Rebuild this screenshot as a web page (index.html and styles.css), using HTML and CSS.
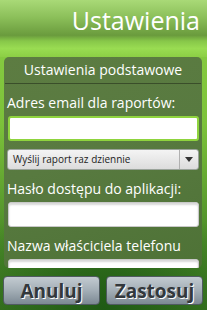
FILE: index.html
```html
<!DOCTYPE html>
<html lang="pl">
<head>
	<meta charset="UTF-8">
	<title>Ustawienia</title>
	<link rel="stylesheet" href="styles.css">
</head>
<body>
	<div class="screen">
		<div class="header">
			<h1>Ustawienia</h1>
		</div>
		<div class="panel">
			<h2>Ustawienia podstawowe</h2>
			<label>Adres email dla raportów:</label>
			<div class="input focused"></div>
			<div class="spinner">
				<span class="value">Wyślij raport raz dziennie</span>
				<span class="arrow"></span>
			</div>
			<label>Hasło dostępu do aplikacji:</label>
			<div class="input"></div>
			<label>Nazwa właściciela telefonu</label>
			<div class="input"></div>
		</div>
		<div class="buttons">
			<button>Anuluj</button>
			<button>Zastosuj</button>
		</div>
	</div>
</body>
</html>
```

FILE: styles.css
```css
body,h1,h2{
	margin: 0;
	padding: 0;
}
body{
	background: #2f6a1e;
	font-family: "Open Sans", "DejaVu Sans", sans-serif;
}
.screen{
	width: 207px;
	height: 310px;
	overflow: hidden;
	background:
		radial-gradient(ellipse 70% 40% at 50% 100%, #1f5a14 0, rgba(31,90,20,0) 100%),
		linear-gradient(to bottom, #8ccf45 0, #7cc23a 40%, #4a8a28 78%, #3a7522 100%);
}
.header{
	height: 57px;
	background:
		linear-gradient(to bottom, #a9d977 0, #8cc05a 30%, #6a9b3d 62%, #87c749 72%, #99dc52 85%, #8ccf45 100%);
}
h1{
	font-weight: normal;
	color: #fff;
	font-size: 25px;
	text-align: right;
	padding: 5px 7px 0 0;
	line-height: 30px;
}
.panel{
	margin: 0 5px 0 4px;
	height: 211px;
	overflow: hidden;
	border-radius: 5px;
	background: linear-gradient(160deg, #5d7c42 0, #587a40 45%, #4e7236 100%);
	padding: 0 3px 0 3px;
	box-sizing: border-box;
}
h2{
	font-weight: normal;
	color: #fff;
	font-size: 14px;
	text-align: center;
	line-height: 26px;
	border-bottom: 1px solid #3a4e2a;
	margin: 0 -2px;
}
label{
	display: block;
	color: #fff;
	font-size: 14px;
	line-height: 20px;
	margin-top: 9px;
}
.input{
	height: 23px;
	margin: 3px 0 0 1px;
	background: #fff;
	border-radius: 3px;
	border: 1px solid #c9c9c9;
	box-shadow: inset 0 2px 2px #d8d8d8;
}
.input.focused{
	border: 2px solid #8fd43e;
	height: 21px;
	box-shadow: none;
}
.spinner{
	display: flex;
	margin: 8px 0 0 0;
	height: 19px;
	border-radius: 3px;
	border: 1px solid #9aa39a;
	background: linear-gradient(to bottom, #f4f4f4, #dcdcdc);
}
.spinner .value{
	flex: 1;
	font-size: 10px;
	line-height: 19px;
	padding-left: 5px;
	color: #222;
}
.spinner .arrow{
	width: 18px;
	border-left: 1px solid #b0b0b0;
	position: relative;
}
.spinner .arrow::after{
	content: "";
	position: absolute;
	left: 5px;
	top: 7px;
	border-left: 4px solid transparent;
	border-right: 4px solid transparent;
	border-top: 5px solid #333;
}
.buttons{
	display: flex;
	gap: 6px;
	padding: 8px 4px 0 3px;
}
.buttons button{
	flex: 1;
	height: 29px;
	border: 1px solid #4f5a60;
	border-radius: 4px;
	background: linear-gradient(to bottom, #c3cbd1 0, #a3aeb6 50%, #7c8993 100%);
	font-family: "Open Sans", "DejaVu Sans", sans-serif;
	font-weight: bold;
	font-size: 19px;
	color: #33383c;
	text-shadow: 1px 1px 0 #fff;
	padding: 0;
}
```
